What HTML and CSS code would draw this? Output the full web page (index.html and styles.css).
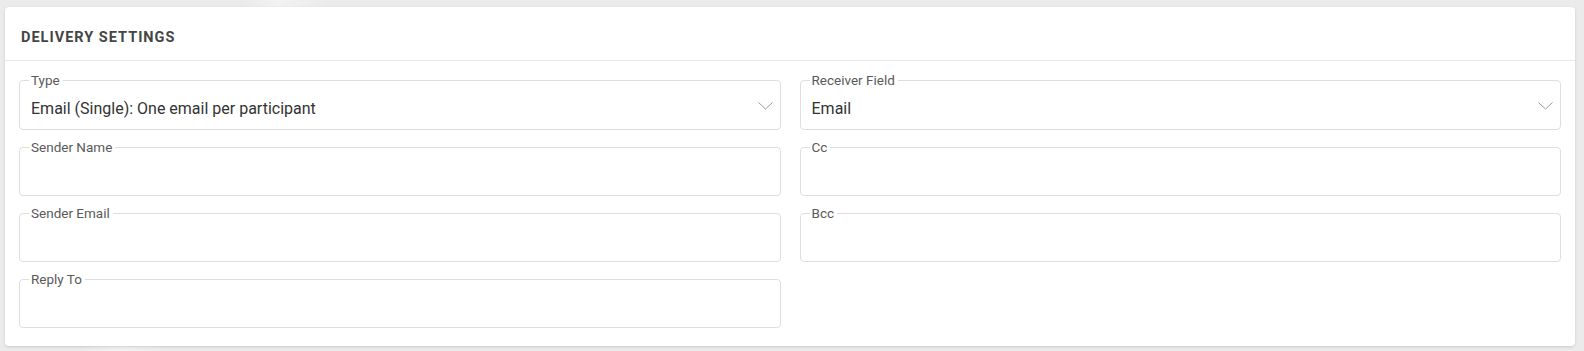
FILE: index.html
```html
<!DOCTYPE html>
<html lang="en">
<head>
  <meta charset="UTF-8">
  <meta name="viewport" content="width=device-width, initial-scale=1.0">
  <title>Delivery Settings</title>
  <link rel="stylesheet" href="styles.css">
</head>
<body>
  <div class="card">
    <div class="card-header">
      <h2>Delivery Settings</h2>
    </div>
    <div class="card-body">
      <fieldset class="field field-select">
        <legend>Type</legend>
        <div class="value">
          <span>Email (Single): One email per participant</span>
          <svg class="chevron" width="15" height="8" viewBox="0 0 15 8"><polyline points="0.5,0.5 7.5,7 14.5,0.5" /></svg>
        </div>
      </fieldset>
      <fieldset class="field field-select">
        <legend>Receiver Field</legend>
        <div class="value">
          <span>Email</span>
          <svg class="chevron" width="15" height="8" viewBox="0 0 15 8"><polyline points="0.5,0.5 7.5,7 14.5,0.5" /></svg>
        </div>
      </fieldset>
      <fieldset class="field">
        <legend>Sender Name</legend>
        <div class="value"></div>
      </fieldset>
      <fieldset class="field">
        <legend>Cc</legend>
        <div class="value"></div>
      </fieldset>
      <fieldset class="field">
        <legend>Sender Email</legend>
        <div class="value"></div>
      </fieldset>
      <fieldset class="field">
        <legend>Bcc</legend>
        <div class="value"></div>
      </fieldset>
      <fieldset class="field">
        <legend>Reply To</legend>
        <div class="value"></div>
      </fieldset>
    </div>
  </div>
</body>
</html>
```

FILE: styles.css
```css
body {
  font-family: Roboto, 'Noto Sans', Arial, sans-serif;
  background: linear-gradient(115deg, #ebebeb 0%, #ebebeb 14%, #f2f2f2 16%, #ebebeb 19%, #ebebeb 100%);
  color: #333;
  margin: 0;
  padding: 7px 9px 7px 5px;
  min-height: 100vh;
  box-sizing: border-box;
}
.card {
  background: #fff;
  border-radius: 4px;
  box-shadow: 0 1px 3px rgba(0, 0, 0, 0.14);
}
.card-header {
  padding: 21px 16px 12px 16px;
  border-bottom: 1px solid #e8e8e8;
}
.card-header h2 {
  margin: 0;
  font-size: 14.5px;
  line-height: 20px;
  font-weight: bold;
  text-transform: uppercase;
  letter-spacing: 1px;
  color: #454545;
}
.card-body {
  display: grid;
  grid-template-columns: 1fr 1fr;
  column-gap: 19px;
  row-gap: 10px;
  padding: 12px 14px 18px 14px;
}
.field {
  margin: 0;
  padding: 0 7px 0 9px;
  border: 1px solid #dedede;
  border-radius: 4px;
  min-width: 0;
}
.field legend {
  padding: 0 3px 0 2px;
  font-size: 13.5px;
  line-height: 14px;
  color: #5a5a5a;
}
.value {
  display: flex;
  align-items: center;
  justify-content: space-between;
  height: 41px;
  padding-left: 2px;
  font-size: 16px;
  color: #333;
}
.field-select .value {
  height: 42px;
}
.chevron {
  margin-bottom: 4px;
}
.chevron polyline {
  fill: none;
  stroke: #9a9a9a;
  stroke-width: 1;
}
```
